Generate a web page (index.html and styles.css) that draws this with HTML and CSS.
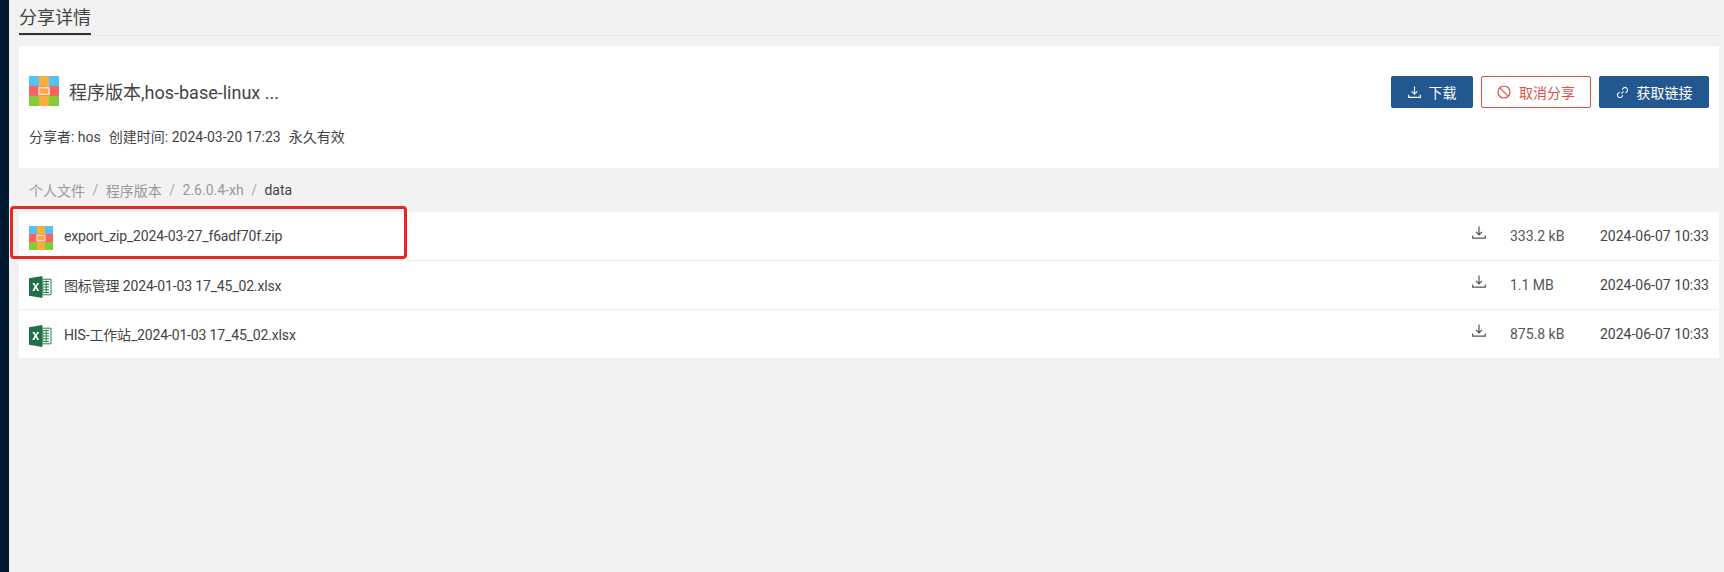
FILE: index.html
```html
<!DOCTYPE html>
<html lang="zh">
<head>
<meta charset="utf-8">
<title>分享详情</title>
<link rel="stylesheet" href="styles.css">
</head>
<body>
<svg class="defs" width="0" height="0" aria-hidden="true">
  <symbol id="zip" viewBox="0 0 30 30">
    <rect width="10" height="10" fill="#56c1f5"/><rect x="10" width="10" height="10" fill="#fbae3c"/><rect x="20" width="10" height="10" fill="#56c1f5"/>
    <rect y="10" width="30" height="10" fill="#f8625f"/>
    <rect y="20" width="10" height="10" fill="#80cc39"/><rect x="10" y="20" width="10" height="10" fill="#fbae3c"/><rect x="20" y="20" width="10" height="10" fill="#80cc39"/>
    <rect x="10" y="11.5" width="10" height="7" fill="#fbae3c" stroke="#fde3c4" stroke-width="1.6"/>
  </symbol>
  <symbol id="xls" viewBox="0 0 24 24" preserveAspectRatio="none">
    <path d="M9 3.500h14v17H9z" fill="#fff" stroke="#1f7246" stroke-width="1"/>
    <path d="M15 6h6M15 9h6M15 12h6M15 15h6M15 18h6M14.500 5v14M18 5v14" stroke="#1f7246" stroke-width="1" fill="none"/>
    <path d="M0 2.500 14 0v24L0 21.500z" fill="#1f7246"/>
    <path d="M3.500 7.500h2.200l1.400 2.800 1.500-2.800h2l-2.400 4.300 2.500 4.500H8.500L7 13.300l-1.500 3H3.400l2.500-4.500z" fill="#fff"/>
  </symbol>
  <symbol id="dl" viewBox="0 0 14 14">
    <path d="M7 .5v8.200M4 5.900l3 3 3-3M.7 9.500v2.700h12.600V9.500" fill="none" stroke="currentColor" stroke-width="1.200"/>
  </symbol>
</svg>
<div class="page">
  <aside class="sidebar"></aside>
  <main class="main">
    <header class="tabs"><h1 class="tab">分享详情</h1></header>
    <section class="card">
      <div class="card-top">
        <div class="title-wrap">
          <svg class="big-icon"><use href="#zip"/></svg>
          <span class="title">程序版本,hos-base-linux ...</span>
        </div>
        <div class="actions">
          <button class="btn btn-primary btn-dl"><svg class="btn-icon"><use href="#dl"/></svg>下载</button>
          <button class="btn btn-danger">
            <svg class="btn-icon ban" viewBox="0 0 14 14"><circle cx="7" cy="7" r="6" fill="none" stroke="currentColor" stroke-width="1.200"/><path d="M2.800 2.800l8.400 8.400" stroke="currentColor" stroke-width="1.200"/></svg>取消分享</button>
          <button class="btn btn-primary btn-link">
            <svg class="btn-icon link" viewBox="0 0 14 14"><path d="M5.800 8.200l2.400-2.400M6.500 3.800l1.400-1.400a2.400 2.400 0 0 1 3.700 3.700l-1.400 1.400M7.500 10.200l-1.400 1.400a2.400 2.400 0 0 1-3.700-3.700l1.400-1.400" fill="none" stroke="currentColor" stroke-width="1.100"/></svg>获取链接</button>
        </div>
      </div>
      <p class="meta"><span>分享者: hos</span><span>创建时间: 2024-03-20 17:23</span><span>永久有效</span></p>
    </section>
    <nav class="crumbs">
      <span>个人文件</span><i>/</i><span>程序版本</span><i>/</i><span>2.6.0.4-xh</span><i>/</i><span class="current">data</span>
    </nav>
    <ul class="list">
      <li class="row">
        <svg class="file-icon"><use href="#zip"/></svg>
        <span class="name">export_zip_2024-03-27_f6adf70f.zip</span>
        <svg class="row-dl"><use href="#dl"/></svg>
        <span class="size">333.2 kB</span>
        <span class="date">2024-06-07 10:33</span>
      </li>
      <li class="row">
        <svg class="file-icon xls-icon"><use href="#xls"/></svg>
        <span class="name">图标管理 2024-01-03 17_45_02.xlsx</span>
        <svg class="row-dl"><use href="#dl"/></svg>
        <span class="size">1.1 MB</span>
        <span class="date">2024-06-07 10:33</span>
      </li>
      <li class="row">
        <svg class="file-icon xls-icon"><use href="#xls"/></svg>
        <span class="name">HIS-工作站_2024-01-03 17_45_02.xlsx</span>
        <svg class="row-dl"><use href="#dl"/></svg>
        <span class="size">875.8 kB</span>
        <span class="date">2024-06-07 10:33</span>
      </li>
    </ul>
  </main>
</div>
<div class="highlight"></div>
</body>
</html>
```
FILE: styles.css
```css
* { box-sizing: border-box; }
html, body { margin: 0; height: 100%; overflow: hidden; }
body {
  background: #f2f2f2;
  color: #333;
  font-family: Roboto, "Noto Sans CJK SC", sans-serif;
  font-size: 14px;
  position: relative;
}
.defs { position: absolute; }
.page { display: flex; height: 572px; }
.sidebar { width: 9px; background: #001a33; flex: none; }
.main { flex: 1; padding: 0 5px 0 10px; min-width: 0; }

.tabs { height: 36px; border-bottom: 1px solid #e4e4e4; display: flex; }
.tab {
  margin: 0;
  width: 72px;
  height: 35px;
  padding-top: 5px;
  font-size: 18px;
  line-height: 26px;
  font-weight: 400;
  color: #444;
  border-bottom: 2px solid #333;
  white-space: nowrap;
}

.card {
  margin-top: 10px;
  height: 122px;
  background: #fff;
  padding: 30px 10px 0;
}
.card-top { display: flex; justify-content: space-between; align-items: flex-start; height: 32px; }
.title-wrap { display: flex; align-items: center; }
.big-icon { width: 30px; height: 30px; flex: none; }
.title { margin-left: 10px; font-size: 18px; color: #444; white-space: nowrap; }
.actions { display: flex; gap: 8px; }
.btn {
  height: 32px;
  border-radius: 2px;
  border: 1px solid transparent;
  font: inherit;
  font-size: 14px;
  display: flex;
  align-items: center;
  justify-content: center;
  padding: 0;
  background: none;
}
.btn-primary { background: #22588f; color: #fff; }
.btn-dl { width: 82px; }
.btn-link { width: 110px; }
.btn-danger { width: 110px; border-color: #d9534f; color: #d9534f; background: #fff; }
.btn-icon { width: 13px; height: 13px; margin-right: 8px; flex: none; }
.ban { width: 14px; height: 14px; }

.meta { margin: 21px 0 0; font-size: 14px; line-height: 16px; color: #444; display: flex; gap: 8px; white-space: nowrap; }

.crumbs {
  height: 44px;
  padding: 0 10px;
  display: flex;
  align-items: center;
  color: #999;
  font-size: 14px;
}
.crumbs i { font-style: normal; margin: 0 7.500px; color: #aaa; }
.crumbs .current { color: #444; }

.list { list-style: none; margin: 0; padding: 0; background: #fff; }
.row {
  height: 49px;
  padding: 0 10px;
  display: flex;
  align-items: center;
  border-bottom: 1px solid #eee;
}
.row:last-child { border-bottom: 0; height: 48px; }
.file-icon { width: 24px; height: 24px; flex: none; margin: 4px 11px 0 0; }
.xls-icon { width: 23px; height: 22px; margin-right: 12px; }
.name { flex: 1; font-size: 14px; letter-spacing: -0.15px; color: #444; white-space: nowrap; }
.row-dl { width: 14px; height: 14px; color: #555; flex: none; margin: 0 24px 6px 0; }
.size { width: 90px; color: #555; font-size: 14px; flex: none; }
.date { color: #444; font-size: 14px; white-space: nowrap; flex: none; }

.highlight {
  position: absolute;
  left: 10px;
  top: 206px;
  width: 397px;
  height: 53px;
  border: 3px solid #e8281e;
  border-radius: 4px;
  pointer-events: none;
}
```
